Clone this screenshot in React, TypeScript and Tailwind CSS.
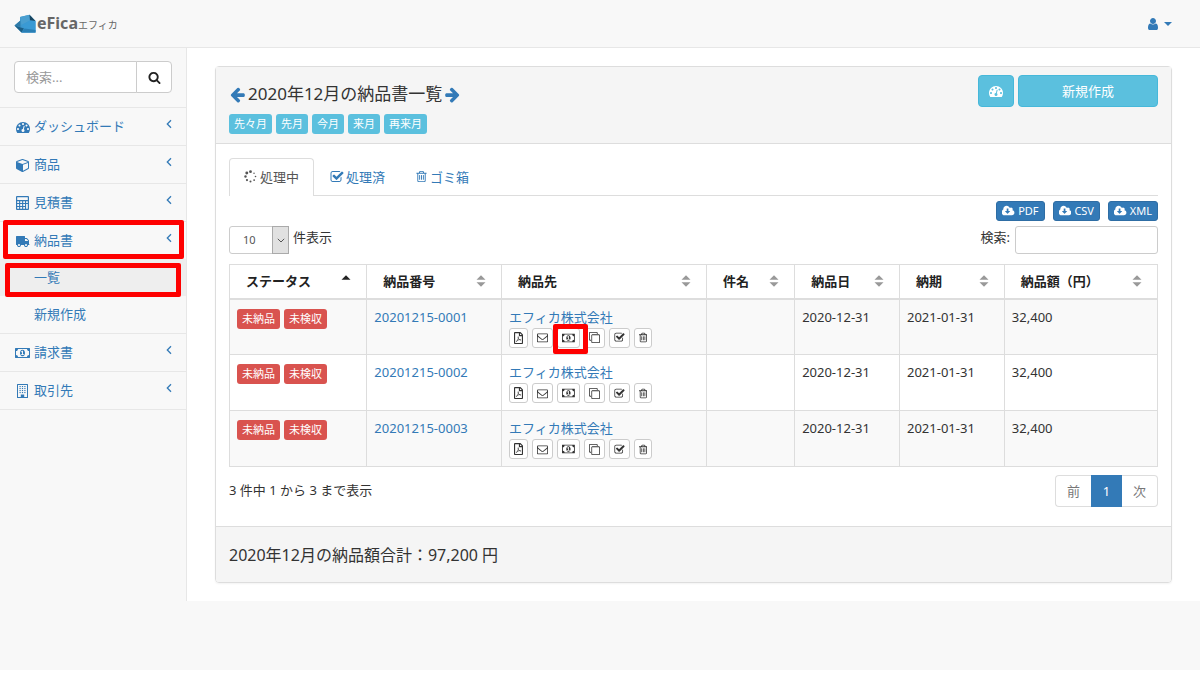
import type { ReactNode } from 'react';
import { FaRegFilePdf } from 'react-icons/fa';

type GlyphProps = { d: string; left?: number; width?: number; className?: string };

function Glyph({ d, left = 0, width = 1792, className = 'h-[13px]' }: GlyphProps) {
  return (
    <svg viewBox={`${left} 0 ${width} 1792`} className={`inline-block shrink-0 ${className}`} fill="currentColor" aria-hidden="true">
      <path d={d} />
    </svg>
  );
}

const SEARCH =
  'M1216 832q0-185-131.5-316.5t-316.5-131.5-316.5 131.5-131.5 316.5 131.5 316.5 316.5 131.5 316.5-131.5 131.5-316.5zm512 832q0 52-38 90t-90 38q-54 0-90-38l-343-342q-179 124-399 124-143 0-273.5-55.5t-225-150-150-225-55.5-273.5 55.5-273.5 150-225 225-150 273.5-55.5 273.5 55.5 225 150 150 225 55.5 273.5q0 220-124 399l343 343q37 37 37 90z';
const ARROW =
  'M1664 896v128q0 53-32.5 90.5t-84.5 37.5h-704l293 294q38 36 38 90t-38 90l-75 76q-37 37-90 37-52 0-91-37l-651-652q-37-37-37-90 0-52 37-91l651-650q38-38 91-38 52 0 90 38l75 74q38 38 38 91t-38 91l-293 293h704q52 0 84.5 37.5t32.5 90.5z';
const TRASH =
  'M704 736v576q0 14-9 23t-23 9h-64q-14 0-23-9t-9-23v-576q0-14 9-23t23-9h64q14 0 23 9t9 23zm256 0v576q0 14-9 23t-23 9h-64q-14 0-23-9t-9-23v-576q0-14 9-23t23-9h64q14 0 23 9t9 23zm256 0v576q0 14-9 23t-23 9h-64q-14 0-23-9t-9-23v-576q0-14 9-23t23-9h64q14 0 23 9t9 23zm128 724v-948h-896v948q0 22 7 40.5t14.5 27 10.5 8.5h832q3 0 10.5-8.5t14.5-27 7-40.5zm-672-1076h448l-48-117q-7-9-17-11h-317q-10 2-17 11zm928 32v64q0 14-9 23t-23 9h-96v948q0 83-47 143.5t-113 60.5h-832q-66 0-113-58.5t-47-141.5v-952h-96q-14 0-23-9t-9-23v-64q0-14 9-23t23-9h309l70-167q15-37 54-63t79-26h320q40 0 79 26t54 63l70 167h309q14 0 23 9t9 23z';
const CHECK =
  'M1472 930v318q0 119-84.5 203.5t-203.5 84.5h-832q-119 0-203.5-84.5t-84.5-203.5v-832q0-119 84.5-203.5t203.5-84.5h832q63 0 117 25 15 7 18 23 3 17-9 29l-49 49q-10 10-23 10-3 0-9-2-23-6-45-6h-832q-66 0-113 47t-47 113v832q0 66 47 113t113 47h832q66 0 113-47t47-113v-254q0-13 9-22l64-64q10-10 23-10 6 0 12 3 20 8 20 29zm231-489l-814 814q-24 24-57 24t-57-24l-430-430q-24-24-24-57t24-57l110-110q24-24 57-24t57 24l263 263 647-647q24-24 57-24t57 24l110 110q24 24 24 57t-24 57z';
const USER =
  'M1536 1399q0 109-62.5 187t-150.5 78h-854q-88 0-150.5-78t-62.5-187q0-85 8.5-160.5t31.5-152 58.5-131 94-89 134.5-34.5q131 128 313 128t313-128q76 0 134.5 34.5t94 89 58.5 131 31.5 152 8.5 160.5zm-256-887q0 159-112.5 271.5t-271.5 112.5-271.5-112.5-112.5-271.5 112.5-271.5 271.5-112.5 271.5 112.5 112.5 271.5z';
const CLOUD =
  'M1216 928q0-14-9-23t-23-9h-224v-352q0-13-9.5-22.5t-22.5-9.5h-192q-13 0-22.5 9.5t-9.5 22.5v352h-224q-13 0-22.5 9.5t-9.5 22.5q0 14 9 23l352 352q9 9 23 9t23-9l351-351q10-12 10-24zm640 224q0 159-112.5 271.5t-271.5 112.5h-1088q-185 0-316.5-131.5t-131.5-316.5q0-130 70-240t188-165q-2-30-2-43 0-212 150-362t362-150q156 0 285.5 87t188.5 231q71-62 166-62 106 0 181 75t75 181q0 76-41 138 130 31 213.5 135.5t83.5 238.5z';
const DASHBOARD =
  'M384 1152q0-53-37.5-90.5t-90.5-37.5-90.5 37.5-37.5 90.5 37.5 90.5 90.5 37.5 90.5-37.5 37.5-90.5zm192-448q0-53-37.5-90.5t-90.5-37.5-90.5 37.5-37.5 90.5 37.5 90.5 90.5 37.5 90.5-37.5 37.5-90.5zm428 481l101-382q6-26-7.5-48.5t-38.5-29.5-48 6.5-30 39.5l-101 382q-60 5-107 43.5t-63 98.5q-20 77 20 146t117 89 146-20 89-117q16-60-6-117t-72-91zm660-33q0-53-37.5-90.5t-90.5-37.5-90.5 37.5-37.5 90.5 37.5 90.5 90.5 37.5 90.5-37.5 37.5-90.5zm-640-640q0-53-37.5-90.5t-90.5-37.5-90.5 37.5-37.5 90.5 37.5 90.5 90.5 37.5 90.5-37.5 37.5-90.5zm448 192q0-53-37.5-90.5t-90.5-37.5-90.5 37.5-37.5 90.5 37.5 90.5 90.5 37.5 90.5-37.5 37.5-90.5zm320 448q0 261-141 483-19 29-54 29h-1402q-35 0-54-29-141-221-141-483 0-182 71-348t191-286 286-191 348-71 348 71 286 191 191 286 71 348z';
const ENVELOPE =
  'M1664 1504v-768q-32 36-69 66-268 206-426 338-51 43-83 67t-86.5 48.5-102.5 24.5h-2q-48 0-102.5-24.5t-86.5-48.5-83-67q-158-132-426-338-37-30-69-66v768q0 13 9.5 22.5t22.5 9.5h1472q13 0 22.5-9.5t9.5-22.5zm0-1051v-24.5l-.5-13-3-12.5-5.5-9-9-7.5-14-2.5h-1472q-13 0-22.5 9.5t-9.5 22.5q0 168 147 284 193 152 401 317 6 5 35 29.5t46 37.5 44.5 31.5 50.5 27.5 43 9h2q20 0 43-9t50.5-27.5 44.5-31.5 46-37.5 35-29.5q208-165 401-317 54-43 100.5-115.5t46.5-131.5zm128-37v1088q0 66-47 113t-113 47h-1472q-66 0-113-47t-47-113v-1088q0-66 47-113t113-47h1472q66 0 113 47t47 113z';
const MONEY =
  'M768 1152h384v-96h-128v-448h-114l-148 137 77 80q42-37 55-57h2v288h-128v96zm512-256q0 70-21 142t-59.5 134-101.5 101-138 39-138-39-101.5-101-59.5-134-21-142 21-142 59.5-134 101.5-101 138-39 138 39 101.5 101 59.5 134 21 142zm512 256v-512q-106 0-181-75t-75-181h-1152q0 106-75 181t-181 75v512q106 0 181 75t75 181h1152q0-106 75-181t181-75zm128-832v1152q0 26-19 45t-45 19h-1792q-26 0-45-19t-19-45v-1152q0-26 19-45t45-19h1792q26 0 45 19t19 45z';
const TRUCK =
  'M640 1408q0-52-38-90t-90-38-90 38-38 90 38 90 90 38 90-38 38-90zm-384-512h384v-256h-158q-13 0-22 9l-195 195q-9 9-9 22v30zm1280 512q0-52-38-90t-90-38-90 38-38 90 38 90 90 38 90-38 38-90zm256-1088v1024q0 15-4 26.5t-13.5 18.5-16.5 11.5-23.5 6-22.5 2-25.5 0-22.5-.5q0 106-75 181t-181 75-181-75-75-181h-384q0 106-75 181t-181 75-181-75-75-181h-64q-3 0-22.5.5t-25.5 0-22.5-2-23.5-6-16.5-11.5-13.5-18.5-4-26.5q0-26 19-45t45-19v-320q0-8-.5-35t0-38 2.5-34.5 6.5-37 14-30.5 22.5-30l198-198q19-19 50.5-32t58.5-13h160v-192q0-26 19-45t45-19h1024q26 0 45 19t19 45z';
const CUBE =
  'M896 1629l640-349v-636l-640 233v752zm-64-865l698-254-698-254-698 254zm832-252v768q0 35-18 65t-49 47l-704 384q-28 16-61 16t-61-16l-704-384q-31-17-49-47t-18-65v-768q0-40 23-73t61-47l704-256q22-8 44-8t44 8l704 256q38 14 61 47t23 73z';
const CLONE =
  'M1664 1632v-1088q0-13-9.5-22.5t-22.5-9.5h-1088q-13 0-22.5 9.5t-9.5 22.5v1088q0 13 9.5 22.5t22.5 9.5h1088q13 0 22.5-9.5t9.5-22.5zm128-1088v1088q0 66-47 113t-113 47h-1088q-66 0-113-47t-47-113v-1088q0-66 47-113t113-47h1088q66 0 113 47t47 113zm-384-384v160h-128v-160q0-13-9.5-22.5t-22.5-9.5h-1088q-13 0-22.5 9.5t-9.5 22.5v1088q0 13 9.5 22.5t22.5 9.5h160v128h-160q-66 0-113-47t-47-113v-1088q0-66 47-113t113-47h1088q66 0 113 47t47 113z';

function Calculator() {
  return (
    <svg viewBox="0 0 13 14" className="h-[14px] w-[13px]" fill="currentColor" aria-hidden="true">
      <path
        fillRule="evenodd"
        d="M1 0h11q1 0 1 1v12q0 1-1 1H1q-1 0-1-1V1q0-1 1-1zM1.200 1.200v2.800h10.600V1.200zM1.200 5.200v1.800h1.900V5.200zm3 0v1.800h1.900V5.200zm3 0v1.800h1.800V5.200zm2.900 0v1.800h1.700V5.200zM1.200 8.100v1.800h1.900V8.100zm3 0v1.800h1.900V8.100zm3 0v1.800h1.800V8.100zm-6 2.900v1.800h1.900V11zm3 0v1.800h1.900V11zm3 0v1.800h1.800V11zm2.900-2.900v4.700h1.700V8.100z"
      />
    </svg>
  );
}

function Building() {
  const cells = [2, 4, 6, 8].flatMap((y) => [2.5, 4.9, 7.3].map((x) => ({ x, y })));
  return (
    <svg viewBox="0 0 11 14" className="h-[14px] w-[11px]" fill="currentColor" aria-hidden="true">
      <path fillRule="evenodd" d="M.5 0h10q.5 0 .5.5v13q0 .5-.5.5H.5q-.5 0-.5-.5V.5Q0 0 .5 0zM1 1v12h2.800v-2.500h3.400v2.500H10V1z" />
      {cells.map((c) => (
        <rect key={`${c.x}-${c.y}`} x={c.x} y={c.y} width="1.2" height="1.1" />
      ))}
    </svg>
  );
}

function Spinner() {
  return (
    <svg viewBox="0 0 14 14" className="h-[13px] w-[13px]" fill="currentColor" aria-hidden="true">
      <circle cx="7" cy="1.8" r="1.5" />
      <circle cx="3" cy="3.3" r="1.6" />
      <circle cx="1.6" cy="7" r="1.3" />
      <circle cx="3.2" cy="10.9" r="1.2" />
      <circle cx="7" cy="12.3" r="1.1" />
      <circle cx="10.9" cy="10.9" r="1" />
      <circle cx="12.4" cy="7" r="0.9" />
      <circle cx="10.8" cy="3.4" r="0.8" />
    </svg>
  );
}

function AngleLeft() {
  return (
    <svg viewBox="0 0 6 10" className="mb-1 h-[10px] w-[6px]" fill="none" stroke="currentColor" strokeWidth="1.3" aria-hidden="true">
      <path d="M5 1.200 1.300 5 5 8.800" />
    </svg>
  );
}

function Logo() {
  return (
    <svg viewBox="0 0 23 20" className="h-5 w-[23px]" aria-hidden="true">
      <path d="M6 3 15.500.800 21.500 7v11.500H7.500L.500 11.500 6 7z" fill="#3d97cd" />
      <path d="M6 3l9.500-2.200.5 5.700-8.500 4.500z" fill="#4a9fd0" />
      <path d="M15.500.800 21.500 7l-5.500-.5z" fill="#174560" />
      <path d="M6.300 6.500.500 11.500l6 1.500z" fill="#2f7ba8" />
      <path d="M.500 11.500l7 7 2.500-4z" fill="#1c5f87" />
      <path d="M7.500 11 16 6.500l5.500.5v11.500h-14l3-4z" fill="#3a9ad4" />
      <path d="M7.500 18.500l3-4 11 1.500v2.500z" fill="#2a7fb5" />
    </svg>
  );
}

type NavItemProps = { icon: ReactNode; label: string; marked?: boolean; children?: ReactNode };

function NavItem({ icon, label, marked, children }: NavItemProps) {
  return (
    <li className="border-b border-[#e7e7e7]">
      <a href="#" className="relative flex h-[37px] items-center px-[14px] pb-[2px] text-[#337ab7]">
        <span className="mr-[3px] flex w-[17px] justify-center pt-[2px]">{icon}</span>
        <span className="flex-1">{label}</span>
        <AngleLeft />
        {marked && <span className="absolute -top-0.5 bottom-0 left-[3px] right-[2px] rounded-[2px] border-[5px] border-[#fe0000]" />}
      </a>
      {children}
    </li>
  );
}

function MonthLink({ children }: { children: ReactNode }) {
  return (
    <a href="#" className="flex h-5 items-center rounded-[3px] bg-[#5bc0de] px-[5px] text-[11px] leading-4 text-white">
      {children}
    </a>
  );
}

function Badge({ children }: { children: ReactNode }) {
  return <span className="flex h-5 items-center rounded-[3px] bg-[#d9534f] px-[5px] text-[11px] text-white">{children}</span>;
}

function ExportButton({ children }: { children: ReactNode }) {
  return (
    <button type="button" className="flex h-5 items-center gap-[3px] rounded-[3px] border border-[#2e6da4] bg-[#337ab7] px-[5px] text-[11px] text-white">
      <Glyph d={CLOUD} width={1920} className="h-3" />
      {children}
    </button>
  );
}

function SortMark({ active }: { active?: boolean }) {
  return (
    <svg viewBox="0 0 10 12" className="h-3 w-[10px] shrink-0" aria-hidden="true">
      <path d="M0.500 4.800 5 .3l4.500 4.500z" fill={active ? '#222' : '#999'} />
      {!active && <path d="M.5 7.200h9L5 11.700z" fill="#999" />}
    </svg>
  );
}

function ActionButton({ label, marked, children }: { label: string; marked?: boolean; children: ReactNode }) {
  return (
    <button type="button" aria-label={label} className="relative flex h-5 items-center rounded-[3px] border border-[#ccc] bg-white px-1 text-[#333]">
      {children}
      {marked && <span className="absolute -top-[5px] -right-[9px] -bottom-[7px] -left-[5px] z-10 rounded-[2px] border-[5px] border-[#fe0000]" />}
    </button>
  );
}

const columns = [
  { label: 'ステータス', width: 'w-[14.8%]' },
  { label: '納品番号', width: 'w-[14.5%]' },
  { label: '納品先', width: 'w-[22.1%]' },
  { label: '件名', width: 'w-[9.5%]' },
  { label: '納品日', width: 'w-[11.3%]' },
  { label: '納期', width: 'w-[11.3%]' },
  { label: '納品額（円）', width: 'w-[16.5%]' },
];

const rows = ['20201215-0001', '20201215-0002', '20201215-0003'];

const cell = 'border border-[#ddd] px-[7px] pt-2 align-top';

export default function App() {
  return (
    <div className="bg-white pb-[5px] font-['Noto_Sans','Noto_Sans_CJK_JP',sans-serif] text-[13px] leading-[18px] text-[#333]">
      <div className="min-h-[calc(100vh-5px)] bg-[#f8f8f8]">
        <header className="flex h-12 items-center justify-between border-b border-[#e7e7e7] pl-[14px] pr-7">
          <a href="#" className="flex items-center text-[#666]">
            <Logo />
            <span className="flex items-baseline">
              <span className="text-[16px] font-bold leading-5">eFica</span>
              <span className="text-[10px]">エフィカ</span>
            </span>
          </a>
          <button type="button" aria-label="ユーザー" className="flex items-center gap-1 text-[#337ab7]">
            <Glyph d={USER} className="h-[14px]" />
            <svg viewBox="0 0 8 4" className="h-1 w-2" fill="currentColor" aria-hidden="true">
              <path d="M0 0h8L4 4z" />
            </svg>
          </button>
        </header>

        <div className="flex">
          <nav className="w-[187px] shrink-0 border-r border-[#e7e7e7]">
            <form className="flex border-b border-[#e7e7e7] px-[14px] pt-[13px] pb-[14px]">
              <input
                type="text"
                aria-label="検索"
                placeholder="検索..."
                className="h-8 w-0 flex-1 rounded-l-[4px] border border-[#ccc] bg-white px-[11px] placeholder:text-[#999]"
              />
              <button type="button" aria-label="検索する" className="-ml-px flex h-8 w-9 items-center justify-center rounded-r-[4px] border border-[#ccc] bg-white text-[#222]">
                <Glyph d={SEARCH} />
              </button>
            </form>
            <ul>
              <NavItem icon={<Glyph d={DASHBOARD} className="h-[14px]" />} label="ダッシュボード" />
              <NavItem icon={<Glyph d={CUBE} className="h-[14px]" />} label="商品" />
              <NavItem icon={<Calculator />} label="見積書" />
              <NavItem icon={<Glyph d={TRUCK} className="h-[14px] -scale-x-100" />} label="納品書" marked>
                <ul>
                  <li>
                    <a href="#" className="relative flex h-[37px] items-center bg-[#eee] pb-[2px] pl-[34px] text-[#337ab7]">
                      一覧
                      <span className="absolute top-1 -bottom-px left-[5px] right-[5px] rounded-[2px] border-[5px] border-[#fe0000]" />
                    </a>
                  </li>
                  <li>
                    <a href="#" className="flex h-[37px] items-center pb-[2px] pl-[34px] text-[#337ab7]">
                      新規作成
                    </a>
                  </li>
                </ul>
              </NavItem>
              <NavItem icon={<Glyph d={MONEY} width={1920} className="h-[14px]" />} label="請求書" />
              <NavItem icon={<Building />} label="取引先" />
            </ul>
          </nav>

          <main className="min-w-0 flex-1 bg-white px-7 py-[18px]">
            <section className="rounded-[4px] border border-[#ddd] shadow-xs">
              <div className="flex items-start justify-between border-b border-[#ddd] bg-[#f5f5f5] px-[13px] pb-[9px]">
                <div className="pt-[14px]">
                  <h1 className="flex h-[26px] items-center gap-[2px] text-[17px]">
                    <a href="#" aria-label="前の月" className="flex text-[#337ab7]">
                      <Glyph d={ARROW} className="h-[17px]" />
                    </a>
                    2020年12月の納品書一覧
                    <a href="#" aria-label="次の月" className="flex text-[#337ab7]">
                      <Glyph d={ARROW} className="h-[17px] -scale-x-100" />
                    </a>
                  </h1>
                  <div className="mt-[7px] flex gap-1">
                    <MonthLink>先々月</MonthLink>
                    <MonthLink>先月</MonthLink>
                    <MonthLink>今月</MonthLink>
                    <MonthLink>来月</MonthLink>
                    <MonthLink>再来月</MonthLink>
                  </div>
                </div>
                <div className="flex gap-1 pt-2">
                  <button type="button" aria-label="ダッシュボード" className="flex h-8 w-9 items-center justify-center rounded-[4px] border border-[#46b8da] bg-[#5bc0de] text-white">
                    <Glyph d={DASHBOARD} className="h-[14px]" />
                  </button>
                  <button type="button" className="h-8 w-[140px] rounded-[4px] border border-[#46b8da] bg-[#5bc0de] text-white">
                    新規作成
                  </button>
                </div>
              </div>

              <div className="px-[13px] pt-[14px] pb-[19px]">
                <div className="flex h-[38px] gap-[2px] border-b border-[#ddd]">
                  <a href="#" className="-mb-px flex items-center gap-[3px] rounded-t-[4px] border border-b-0 border-[#ddd] bg-white px-[14px] pb-[2px] text-[#555]">
                    <Spinner />
                    処理中
                  </a>
                  <a href="#" className="flex items-center gap-[2px] px-[14px] text-[#337ab7]">
                    <Glyph d={CHECK} className="h-[14px]" />
                    処理済
                  </a>
                  <a href="#" className="flex items-center gap-[2px] px-[14px] text-[#337ab7]">
                    <Glyph d={TRASH} />
                    ゴミ箱
                  </a>
                </div>

                <div className="mt-[5px] flex justify-end gap-2">
                  <ExportButton>PDF</ExportButton>
                  <ExportButton>CSV</ExportButton>
                  <ExportButton>XML</ExportButton>
                </div>

                <div className="mt-[5px] flex justify-between">
                  <div className="flex items-start gap-1">
                    <div className="relative">
                      <select id="page-size" defaultValue="10" className="h-7 w-[60px] appearance-none rounded-[3px] border border-[#ccc] bg-white pl-[13px] text-[11px] text-[#555]">
                        <option>10</option>
                        <option>25</option>
                        <option>50</option>
                      </select>
                      <span className="pointer-events-none absolute inset-y-0 right-0 flex w-[17px] items-center justify-center border border-[#aaa] bg-[#e1e1e1]">
                        <svg viewBox="0 0 8 5" className="h-[5px] w-2" fill="none" stroke="#555" aria-hidden="true">
                          <path d="M.8.8 4 4 7.200.8" />
                        </svg>
                      </span>
                    </div>
                    <label htmlFor="page-size" className="pt-[2px]">件表示</label>
                  </div>
                  <div className="flex items-start gap-[5px]">
                    <label htmlFor="table-search" className="pt-[2px]">検索:</label>
                    <input id="table-search" type="search" className="h-7 w-[143px] rounded-[3px] border border-[#ccc] bg-white px-2" />
                  </div>
                </div>

                <table className="mt-[10px] w-full table-fixed border-collapse border border-[#ddd]">
                  <thead>
                    <tr>
                      {columns.map((c, i) => (
                        <th key={c.label} className={`${c.width} h-[34px] border border-b-2 border-[#ddd] pr-[15px] pl-4 text-left font-bold text-[#222]`}>
                          <span className="flex items-center justify-between whitespace-nowrap">
                            {c.label}
                            <SortMark active={i === 0} />
                          </span>
                        </th>
                      ))}
                    </tr>
                  </thead>
                  <tbody>
                    {rows.map((number, i) => (
                      <tr key={number} className="h-14 odd:bg-[#f9f9f9]">
                        <td className={cell}>
                          <div className="flex gap-1 pt-px">
                            <Badge>未納品</Badge>
                            <Badge>未検収</Badge>
                          </div>
                        </td>
                        <td className={cell}>
                          <a href="#" className="text-[#337ab7]">{number}</a>
                        </td>
                        <td className={cell}>
                          <a href="#" className="block text-[#337ab7]">エフィカ株式会社</a>
                          <div className="mt-[2px] flex gap-1">
                            <ActionButton label="PDF">
                              <FaRegFilePdf className="h-3 w-[9px]" />
                            </ActionButton>
                            <ActionButton label="メール">
                              <Glyph d={ENVELOPE} className="h-[11px]" />
                            </ActionButton>
                            <ActionButton label="請求書作成" marked={i === 0}>
                              <Glyph d={MONEY} width={1920} className="h-3" />
                            </ActionButton>
                            <ActionButton label="複製">
                              <Glyph d={CLONE} className="h-[11px]" />
                            </ActionButton>
                            <ActionButton label="処理済にする">
                              <Glyph d={CHECK} className="h-[11px]" />
                            </ActionButton>
                            <ActionButton label="ゴミ箱に移動">
                              <Glyph d={TRASH} left={192} width={1408} className="h-[11px]" />
                            </ActionButton>
                          </div>
                        </td>
                        <td className={cell} />
                        <td className={cell}>2020-12-31</td>
                        <td className={cell}>2021-01-31</td>
                        <td className={cell}>32,400</td>
                      </tr>
                    ))}
                  </tbody>
                </table>

                <div className="mt-2 flex justify-between">
                  <p className="pt-[6px]">3 件中 1 から 3 まで表示</p>
                  <div className="flex h-8 text-[#777]">
                    <button type="button" className="w-9 rounded-l-[4px] border border-r-0 border-[#ddd] bg-white">前</button>
                    <button type="button" className="w-[31px] border border-[#337ab7] bg-[#337ab7] text-white">1</button>
                    <button type="button" className="w-9 rounded-r-[4px] border border-l-0 border-[#ddd] bg-white">次</button>
                  </div>
                </div>
              </div>

              <div className="flex h-14 items-center rounded-b-[3px] border-t border-[#ddd] bg-[#f5f5f5] px-[13px] text-[16px]">
                2020年12月の納品額合計：97,200 円
              </div>
            </section>
          </main>
        </div>
      </div>
    </div>
  );
}
